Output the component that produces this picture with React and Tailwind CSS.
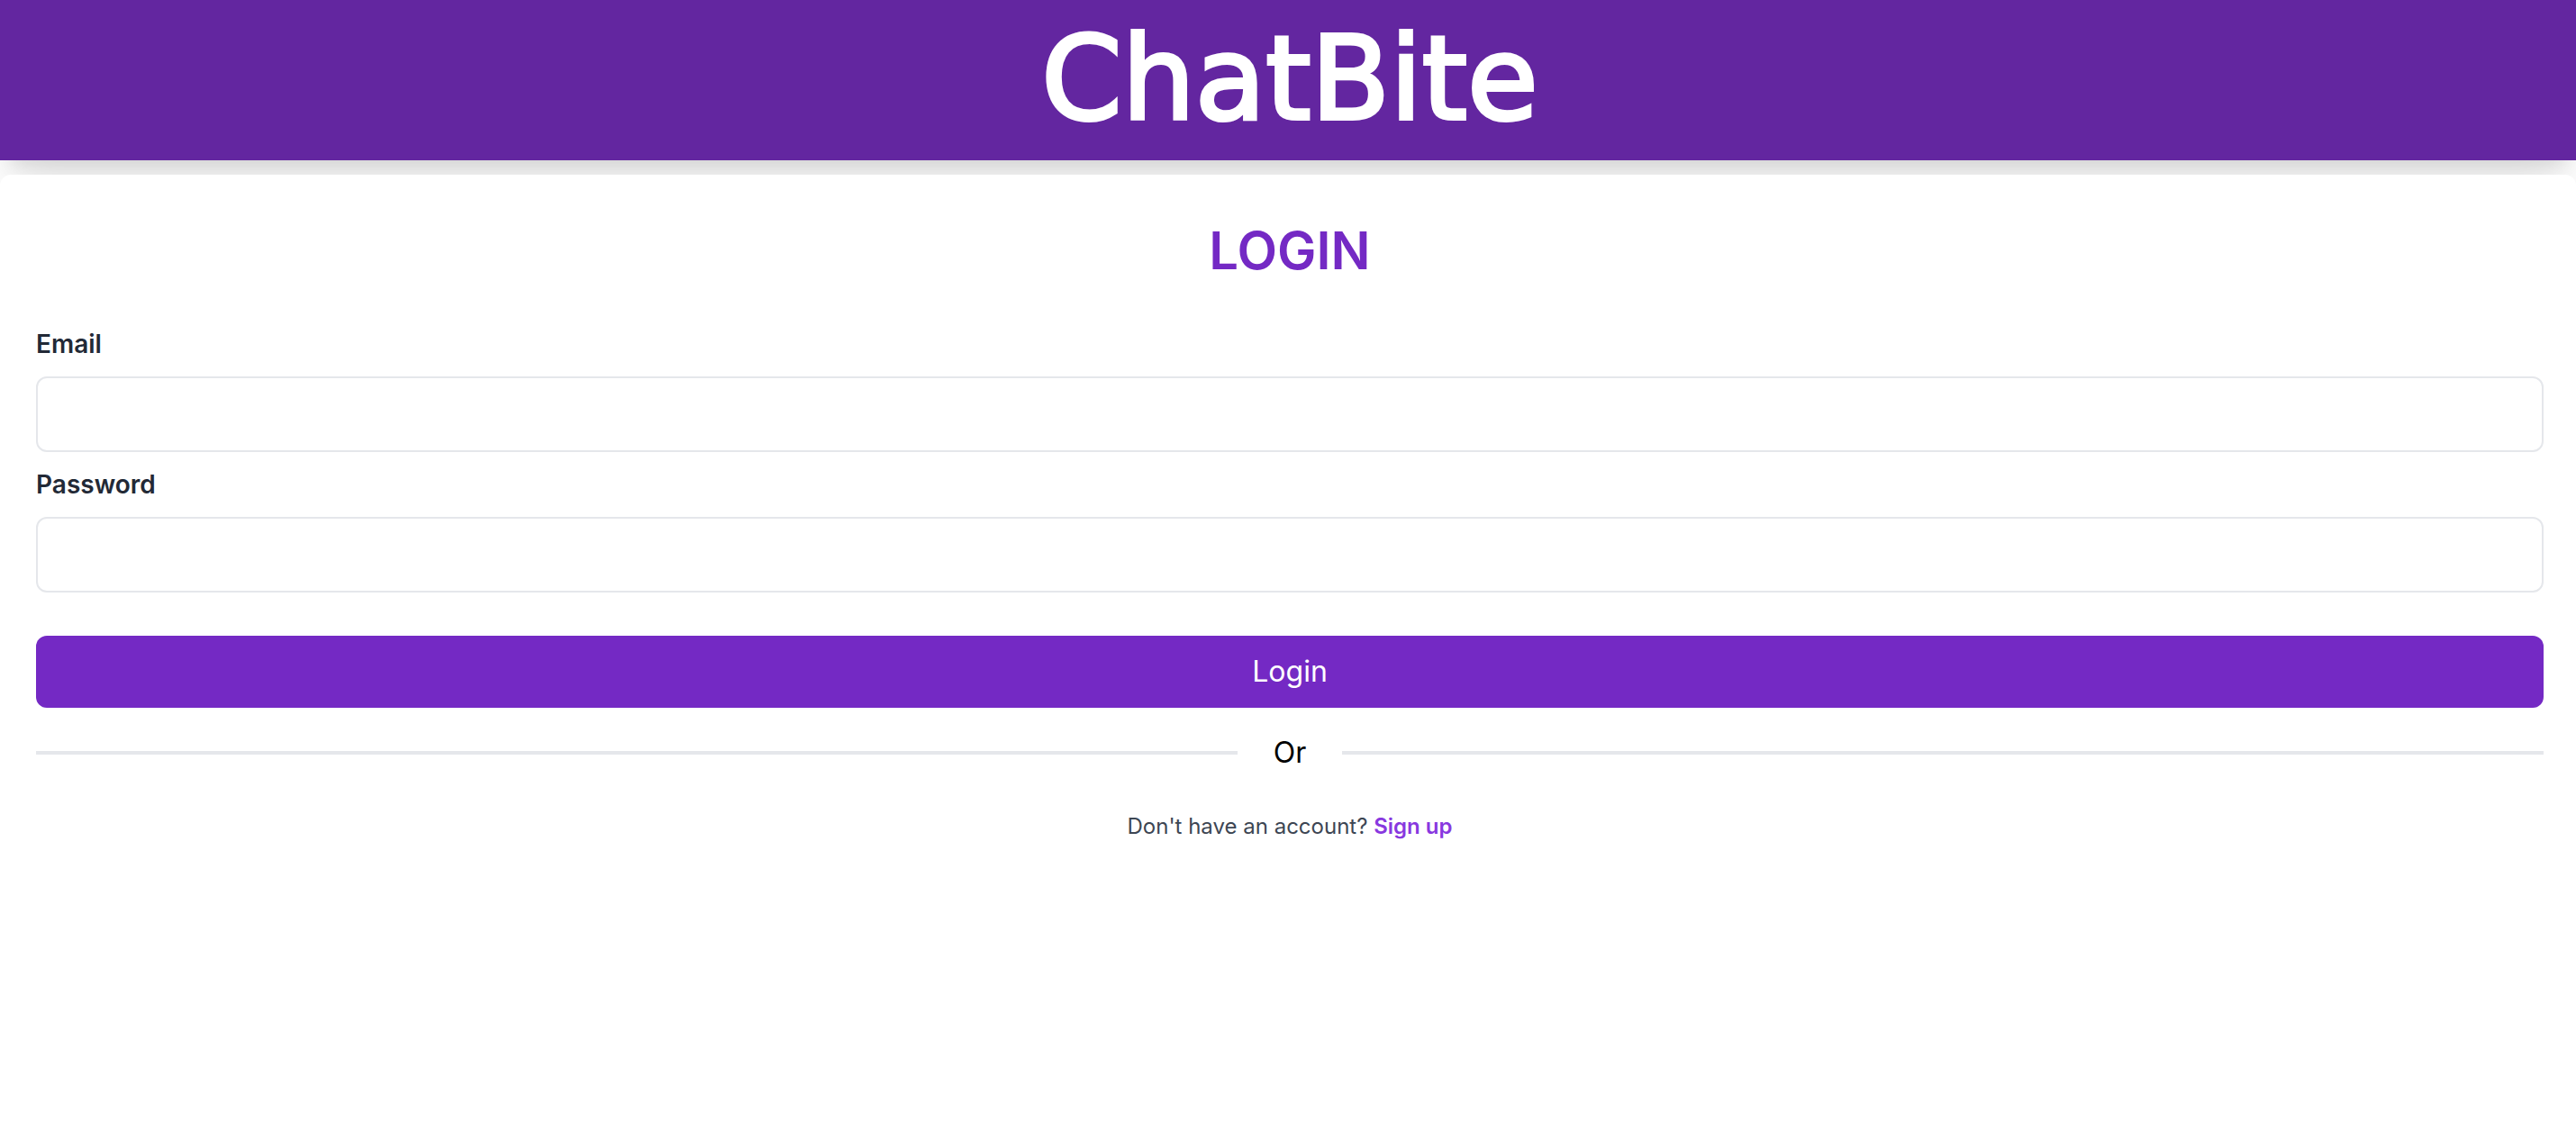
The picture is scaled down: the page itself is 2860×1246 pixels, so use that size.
function Field({ id, label, type, autoComplete }) {
  return (
    <div className="flex flex-col gap-4">
      <label htmlFor={id} className="text-[28px] leading-10 font-semibold text-[#222936]">
        {label}
      </label>
      <input
        id={id}
        name={id}
        type={type}
        autoComplete={autoComplete}
        className="h-21 w-full rounded-xl border-2 border-[#e5e7eb] bg-white px-8 text-[32px] text-[#222936] outline-none focus:border-[#8838df]"
      />
    </div>
  );
}

export default function App() {
  return (
    <div className="min-h-screen bg-white font-['Inter',sans-serif]">
      <header className="flex justify-center bg-[#6326a0] pt-6 pb-[26px] pl-1 shadow-[0_40px_50px_-10px_rgba(0,0,0,0.1),0_16px_20px_-12px_rgba(0,0,0,0.1)]">
        <a
          href="#"
          className="font-['DejaVu_Sans',sans-serif] text-[128px] leading-[128px] text-white [-webkit-text-stroke:4px_white]"
        >
          ChatBite
        </a>
      </header>

      <main className="relative mt-4 min-h-[80vh] rounded-xl bg-white pt-12 pr-9 pb-12 pl-10">
        <h1 className="text-center text-[58px] leading-[72px] font-semibold text-[#7429c4]">LOGIN</h1>

        <form className="mt-12 flex flex-col gap-4" onSubmit={(e) => e.preventDefault()}>
          <Field id="email" label="Email" type="email" autoComplete="email" />
          <Field id="password" label="Password" type="password" autoComplete="current-password" />
          <button
            type="submit"
            className="mt-8 h-20 w-full rounded-xl bg-[#7429c4] text-[32px] leading-10 text-white"
          >
            Login
          </button>
        </form>

        <div className="mt-6 flex items-center gap-10 text-[32px] leading-[52px] text-black">
          <span className="h-1 flex-1 bg-[#e5e7eb]" />
          <span>Or</span>
          <span className="h-1 flex-1 bg-[#e5e7eb]" />
        </div>

        <p className="mt-10 text-center text-2xl leading-8 text-[#3d4653]">
          Don't have an account?{" "}
          <a href="#" className="font-semibold text-[#8838df]">
            Sign up
          </a>
        </p>
      </main>
    </div>
  );
}
